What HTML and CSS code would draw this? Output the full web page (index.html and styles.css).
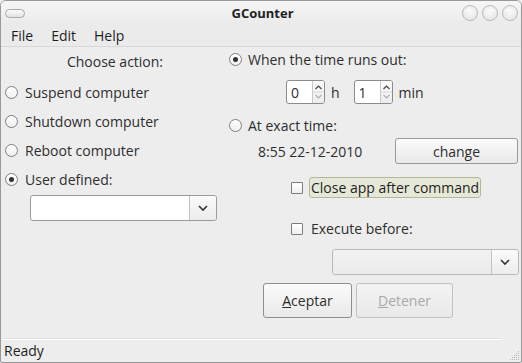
FILE: index.html
```html
<!DOCTYPE html>
<html>
<head>
<meta charset="utf-8">
<link rel="stylesheet" href="styles.css">
</head>
<body>
<div class="window">
  <div class="titlebar">
    <div class="pill"></div>
    <div class="title">GCounter</div>
    <div class="wbtns"><span class="wbtn"></span><span class="wbtn"></span><span class="wbtn"></span></div>
  </div>
  <div class="menubar">
    <span class="menu">File</span><span class="menu">Edit</span><span class="menu">Help</span>
  </div>
  <div class="content">
    <div class="left">
      <div class="heading">Choose action:</div>
      <div class="row"><span class="radio"></span><span>Suspend computer</span></div>
      <div class="row"><span class="radio"></span><span>Shutdown computer</span></div>
      <div class="row"><span class="radio"></span><span>Reboot computer</span></div>
      <div class="row"><span class="radio on"></span><span>User defined:</span></div>
      <div class="combo combo-user">
        <div class="combo-field"></div>
        <div class="combo-arrow"><svg width="12" height="8" viewBox="0 0 12 8"><path d="M2 2 L6 6 L10 2" fill="none" stroke="#333" stroke-width="1.6"/></svg></div>
      </div>
    </div>
    <div class="right">
      <div class="rrow r1"><span class="radio on"></span><span>When the time runs out:</span></div>
      <div class="spinrow">
        <div class="spin"><span class="spin-val">0</span><span class="spin-btns"><svg width="11" height="22" viewBox="0 0 11 22"><path d="M2.5 8 L5.5 5 L8.5 8" fill="none" stroke="#444" stroke-width="1.2"/><path d="M2.5 14 L5.5 17 L8.5 14" fill="none" stroke="#b0b0b0" stroke-width="1.2"/><line x1="0" y1="11" x2="11" y2="11" stroke="#dadada"/></svg></span></div>
        <span class="unit">h</span>
        <div class="spin"><span class="spin-val">1</span><span class="spin-btns"><svg width="11" height="22" viewBox="0 0 11 22"><path d="M2.5 8 L5.5 5 L8.5 8" fill="none" stroke="#444" stroke-width="1.2"/><path d="M2.5 14 L5.5 17 L8.5 14" fill="none" stroke="#b0b0b0" stroke-width="1.2"/><line x1="0" y1="11" x2="11" y2="11" stroke="#dadada"/></svg></span></div>
        <span class="unit">min</span>
      </div>
      <div class="rrow r2"><span class="radio"></span><span>At exact time:</span></div>
      <div class="daterow"><span class="date">8:55 22-12-2010</span><button class="btn change">change</button></div>
      <div class="crow c1"><span class="check"></span><span class="focus">Close app after command</span></div>
      <div class="crow c2"><span class="check"></span><span class="lbl2">Execute before:</span></div>
      <div class="combo combo-exec disabled">
        <div class="combo-field"></div>
        <div class="combo-arrow"><svg width="12" height="8" viewBox="0 0 12 8"><path d="M2 2 L6 6 L10 2" fill="none" stroke="#333" stroke-width="1.6"/></svg></div>
      </div>
      <div class="btnrow">
        <button class="btn accept"><u>A</u>ceptar</button>
        <button class="btn stop" disabled><u>D</u>etener</button>
      </div>
    </div>
  </div>
  <div class="statusbar">
    <div class="sep"></div>
    <div class="status">Ready</div>
    <svg class="grip" width="12" height="12" viewBox="0 0 12 12">
      <g fill="#b8b8b8">
        <rect x="10" y="2" width="1" height="1"/>
        <rect x="8" y="4" width="1" height="1"/><rect x="10" y="4" width="1" height="1"/>
        <rect x="6" y="6" width="1" height="1"/><rect x="8" y="6" width="1" height="1"/><rect x="10" y="6" width="1" height="1"/>
        <rect x="4" y="8" width="1" height="1"/><rect x="6" y="8" width="1" height="1"/><rect x="8" y="8" width="1" height="1"/><rect x="10" y="8" width="1" height="1"/>
        <rect x="2" y="10" width="1" height="1"/><rect x="4" y="10" width="1" height="1"/><rect x="6" y="10" width="1" height="1"/><rect x="8" y="10" width="1" height="1"/><rect x="10" y="10" width="1" height="1"/>
      </g>
    </svg>
  </div>
</div>
</body>
</html>
```

FILE: styles.css
```css
* { box-sizing: border-box; }
html, body { margin: 0; padding: 0; background: #ededed; }
body {
  font-family: "Open Sans", "Noto Sans", sans-serif;
  font-size: 14px;
  color: #2e2e2e;
}
.window {
  width: 522px;
  height: 363px;
  border: 1px solid #999;
  border-radius: 6px 6px 2px 2px;
  background: #ededed;
  display: flex;
  flex-direction: column;
  overflow: hidden;
}
.titlebar {
  height: 23px;
  display: flex;
  align-items: center;
  justify-content: space-between;
  padding: 0 3px 0 4px;
  background: linear-gradient(#f6f6f6, #ebebeb);
}
.pill {
  width: 20px; height: 9px;
  border: 1px solid #a9a9a9;
  border-radius: 5px;
  background: linear-gradient(#fbfbfb, #e3e3e3);
  margin-top: 2px;
}
.title {
  font-weight: bold;
  color: #222;
  font-size: 13px;
  margin-left: 38px;
}
.wbtns { display: flex; gap: 4px; }
.wbtn {
  width: 16px; height: 16px;
  border-radius: 50%;
  border: 1px solid #b9b9b9;
  background: radial-gradient(circle at 50% 35%, #fafafa, #e3e3e3);
}
.menubar {
  height: 23px;
  display: flex;
  align-items: center;
  padding-left: 10px;
  gap: 18px;
  background: #ebebeb;
  border-bottom: 1px solid #d8d8d8;
  color: #1f1f1f;
}
.content {
  flex: 1;
  display: flex;
}
.left {
  width: 224px;
  display: flex;
  flex-direction: column;
  padding-left: 4px;
}
.heading {
  text-align: center;
  margin-top: 6px;
  height: 18px;
  line-height: 18px;
}
.row {
  height: 29px;
  display: flex;
  align-items: center;
  gap: 7px;
}
.heading + .row { margin-top: 7px; }
.radio {
  width: 13px; height: 13px;
  border-radius: 50%;
  border: 1px solid #7f7f7f;
  background: linear-gradient(#ffffff, #efefef);
  display: inline-flex;
  align-items: center;
  justify-content: center;
  flex: none;
}
.radio.on::after {
  content: "";
  width: 5px; height: 5px;
  border-radius: 50%;
  background: #333;
}
.combo {
  height: 26px;
  display: flex;
  border: 1px solid #9b9b9b;
  border-radius: 3px;
  background: #fff;
  overflow: hidden;
}
.combo-user {
  margin-top: 1px;
  margin-left: 25px;
  width: 187px;
}
.combo-field { flex: 1; }
.combo-arrow {
  width: 27px;
  border-left: 1px solid #c4c4c4;
  background: linear-gradient(#fbfbfb, #ececec);
  display: flex;
  align-items: center;
  justify-content: center;
}
.combo.disabled { border-color: #b8b8b8; background: #f0f0f0; }
.combo.disabled .combo-field { background: linear-gradient(#f2f2f2, #ebebeb); }
.right {
  flex: 1;
  display: flex;
  flex-direction: column;
  padding-left: 4px;
}
.rrow {
  display: flex;
  align-items: center;
  gap: 6px;
  height: 24px;
}
.spinrow {
  display: flex;
  align-items: center;
  height: 24px;
  margin-top: 9px;
  padding-left: 57px;
}
.spin {
  width: 39px; height: 24px;
  border: 1px solid #8c8c8c;
  border-radius: 3px;
  background: #fff;
  display: flex;
  align-items: center;
  overflow: hidden;
}
.spin-val { flex: 1; padding-left: 4px; }
.spin-btns {
  width: 12px; height: 22px;
  border-left: 1px solid #c9c9c9;
  background: linear-gradient(#fbfbfb, #ededed);
  display: flex;
}
.unit { margin-left: 6px; margin-right: 14px; }
.r2 { margin-top: 9px; }
.daterow {
  display: flex;
  align-items: center;
  justify-content: space-between;
  height: 26px;
  margin-top: 1px;
  padding-left: 29px;
  padding-right: 3px;
}
.btn {
  font: inherit;
  color: #2e2e2e;
  border: 1px solid #9a9a9a;
  border-radius: 3px;
  background: linear-gradient(#fbfbfb, #e9e9e9);
  padding: 0;
}
.change { width: 123px; height: 26px; }
.crow {
  display: flex;
  align-items: center;
  padding-left: 62px;
}
.c1 { height: 21px; margin-top: 13px; }
.c2 { height: 21px; margin-top: 20px; }
.check {
  width: 12px; height: 12px;
  border: 1px solid #7c7c7c;
  background: linear-gradient(#fff, #f0f0f0);
  border-radius: 1px;
  margin-right: 6px;
}
.focus {
  border: 1px solid #b5b79a;
  border-radius: 3px;
  background: #e6e8d7;
  padding: 0 1px 0 1px;
  height: 21px;
  line-height: 19px;
  color: #1f1f1f;
}
.lbl2 { padding-left: 2px; }
.combo-exec {
  margin-top: 10px;
  margin-left: 103px;
  width: 187px;
}
.btnrow {
  display: flex;
  gap: 4px;
  margin-top: 8px;
  padding-left: 34px;
}
.accept { width: 89px; height: 35px; border-color: #8f8f8f; }
.stop { width: 97px; height: 35px; color: #a9a9a9; border-color: #c2c2c2; background: linear-gradient(#f3f3f3, #e9e9e9); }
.statusbar {
  height: 24px;
  position: relative;
  display: flex;
  flex-direction: column;
}
.sep { height: 2px; margin: 0 19px 0 1px; border-top: 1px solid #e0e0e0; border-bottom: 1px solid #fff; }
.status { padding-left: 3px; line-height: 21px; color: #1f1f1f; }
.grip { position: absolute; right: 1px; bottom: 1px; }
```
